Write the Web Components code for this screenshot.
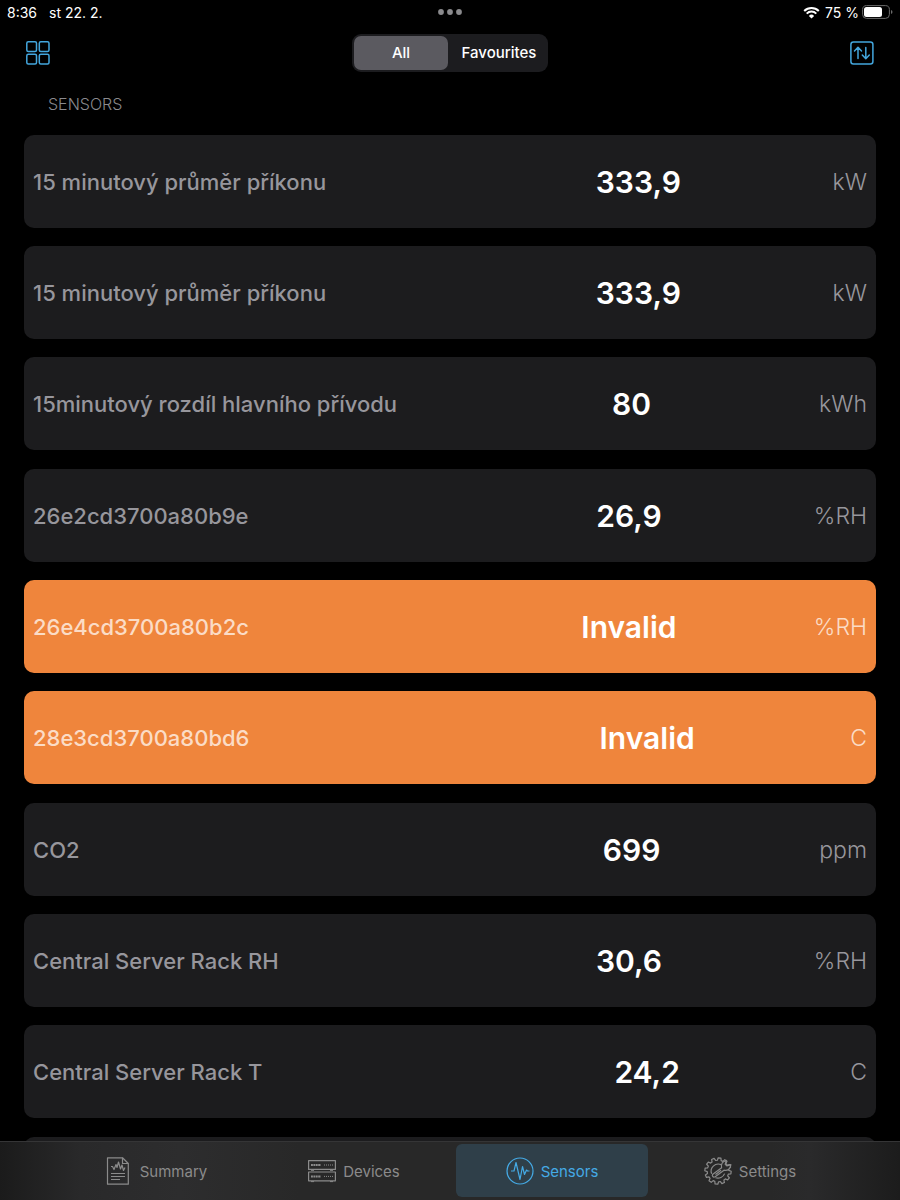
<!DOCTYPE html>
<html lang="en">
<head>
<meta charset="utf-8">
<meta name="viewport" content="width=device-width, initial-scale=1">
<title>Sensors</title>
<style>
html, body { margin: 0; background: #000; }
body { font-family: Inter, "Liberation Sans", sans-serif; color: #fff; }
</style>
</head>
<body>
<sensor-app></sensor-app>
<script>
const define = (name, html, setup) => {
  const template = document.createElement("template");
  template.innerHTML = html;
  customElements.define(name, class extends HTMLElement {
    constructor() {
      super();
      this.attachShadow({ mode: "open" }).append(template.content.cloneNode(true));
    }
    connectedCallback() { if (setup) setup(this, this.shadowRoot); }
  });
};

/* Outline of a cog with rounded-off teeth around (14, 14). */
const cog = (teeth, outer, inner) => {
  const points = [];
  const step = Math.PI * 2 / teeth;
  for (let i = 0; i < teeth; i++) {
    [[-0.34, inner], [-0.2, outer], [0.2, outer], [0.34, inner]].forEach(([shift, r]) => {
      const a = (i + shift) * step - Math.PI / 2 + 0.12;
      points.push((14 + r * Math.cos(a)).toFixed(2) + " " + (14 + r * Math.sin(a)).toFixed(2));
    });
  }
  return "M" + points.join("L") + "Z";
};

const icons = {
  summary: `<path d="M2.500 .8H17.500L23.300 6.500V27.200H2.500Z"/><path d="M17.500 .8V6.500H23.300"/><path d="M6 9.500h1.500l1.500 3 2-5 1 3 1.500-5.500 2 7 1.500-4 1.500 5.500 1.500-3"/><path d="M6 16.500H20M6 19.500H20M6 22.500H15"/>`,
  devices: `<path d="M.6 3.600H27.400V12.400H.6ZM.6 15H27.400V23.800H.6Z"/><path d="M3 13.300h3M22 13.300h3M3 24.600h3M22 24.600h3" stroke-width="1"/><path d="M3 8H13M3 19.400H13" stroke-width="2" stroke-dasharray="1.900 .5"/><path d="M16 8H25M16 19.400H25" stroke-width="1" stroke-dasharray="1 1"/>`,
  sensors: `<circle cx="14" cy="14" r="13"/><path d="M5 14h3l2-8.500L14 22.500 16.500 9.500 18.500 17.500 20.500 13l1 1h2"/>`,
  settings: `<path d="${cog(12, 13.2, 10.8)}"/><path d="M17 7.600A7.200 7.200 0 0 0 7.600 16.800M20.600 16.600A7.200 7.200 0 0 1 11.500 20.800"/><path d="M8.800 17.200L17.600 10.800C16.700 7.300 18.600 4.300 22.300 3.300L21.200 7.400 22.800 8.900 26.900 7.700C26.300 12.300 23.500 14 20 13.200L11.200 19.800C8.900 20.800 7.600 18.800 8.800 17.200Z" fill="#2a2a2a"/><path d="M11.500 17.500L17 13.300"/>`
};

define("status-bar", `
<style>
:host { display: grid; grid-template-columns: 1fr auto 1fr; align-items: center; height: 24px; padding: 0 7px; font-size: 14px; font-weight: 400; white-space: nowrap; }
.left { display: flex; gap: 12px; }
.right { display: flex; gap: 5px; justify-content: flex-end; align-items: center; }
.battery { margin-left: -2px; }
svg { display: block; }
</style>
<div class="left"><span>8:36</span><span>st 22. 2.</span></div>
<svg width="26" height="6" viewBox="0 0 26 6" fill="#8a8a8d"><circle cx="4" cy="3" r="2.900"/><circle cx="13" cy="3" r="2.900"/><circle cx="22" cy="3" r="2.900"/></svg>
<div class="right">
<svg width="17" height="13" viewBox="0 0 17 13" fill="none" stroke="#fff" stroke-width="2"><path d="M1.200 5a10.400 10.400 0 0 1 14.600 0M3.700 7.600a6.800 6.800 0 0 1 9.600 0"/><path d="M8.500 12.500L5.900 9.900a3.700 3.700 0 0 1 5.200 0Z" fill="#fff" stroke="none"/></svg>
<span>75 %</span>
<svg class="battery" width="31" height="14" viewBox="0 0 31 14"><rect x=".6" y=".6" width="26.800" height="12.800" rx="4" fill="none" stroke="#6b6b6b"/><rect x="2" y="2" width="18" height="10" rx="2.500" fill="#fff"/><path d="M29 5v4q1.500-.5 1.500-2T29 5Z" fill="#6b6b6b"/></svg>
</div>`);

define("segment-control", `
<style>
:host { display: flex; padding: 2px; gap: 4px; background: #1c1c1f; border-radius: 9px; }
button { all: unset; box-sizing: border-box; flex: 1 0 94px; height: 34px; padding-bottom: 2px; border-radius: 7px; text-align: center; font-size: 15px; font-weight: 500; color: #fff; cursor: pointer; }
button[aria-pressed="true"] { background: #5b5a60; }
</style>
<button type="button" aria-pressed="true">All</button><button type="button" aria-pressed="false">Favourites</button>`,
(host, root) => {
  const buttons = [...root.querySelectorAll("button")];
  buttons.forEach(b => b.onclick = () => buttons.forEach(o => o.setAttribute("aria-pressed", o === b)));
});

define("tool-bar", `
<style>
:host { display: grid; grid-template-columns: 1fr auto 1fr; align-items: center; height: 58px; padding: 0 26px; }
button { all: unset; display: block; cursor: pointer; }
button:last-child { justify-self: end; }
svg { display: block; fill: none; stroke: #43a6dd; stroke-width: 1.500; stroke-linecap: round; stroke-linejoin: round; }
</style>
<button type="button" aria-label="Grid view"><svg width="24" height="24" viewBox="0 0 24 24"><rect x=".8" y=".8" width="9.700" height="9.700" rx="1.500"/><rect x="13.300" y=".8" width="9.700" height="9.700" rx="1.500"/><rect x=".8" y="13.300" width="9.700" height="9.700" rx="1.500"/><rect x="13.300" y="13.300" width="9.700" height="9.700" rx="1.500"/></svg></button>
<segment-control></segment-control>
<button type="button" aria-label="Sort"><svg width="24" height="24" viewBox="0 0 24 24"><rect x=".9" y=".9" width="22" height="22" rx="2.500"/><path d="M8 17.500V6.500M4.500 10L8 6.200 11.500 10M15.800 6.500V17.500M12.300 14L15.800 17.800 19.300 14"/></svg></button>`);

define("sensor-row", `
<style>
:host { display: flex; align-items: center; box-sizing: border-box; height: 93px; padding: 0 9px; border-radius: 10px; background: #1c1c1e; color: #97969c; font-size: 22px; line-height: 28px; }
:host([invalid]) { background: #ef853c; color: #fbdcc6; }
.name { flex: 0 0 50%; font-weight: 500; }
.value { flex: 1; padding-right: 6px; text-align: center; color: #fff; font-size: 30px; font-weight: 600; }
.unit { font-size: 23px; font-weight: 300; }
</style>
<span class="name"><slot name="name"></slot></span><span class="value"><slot></slot></span><span class="unit"><slot name="unit"></slot></span>`,
host => host.setAttribute("role", "listitem"));

define("sensor-list", `
<style>
:host { display: block; padding: 0 24px; }
h2 { margin: 0; padding: 11px 24px 20px; font-size: 16px; line-height: 22px; font-weight: 300; color: #8a8a8e; }
::slotted(sensor-row) { margin-bottom: 18px; }
::slotted(sensor-row:nth-child(3n)) { margin-bottom: 19px; }
</style>
<h2>SENSORS</h2>
<div role="list"><slot></slot></div>`);

define("tab-item", `
<style>
:host { display: flex; flex: 1; }
button { all: unset; flex: 1; display: flex; align-items: center; justify-content: center; gap: 7px; border-radius: 6px; color: #8b8b8b; font-size: 15px; cursor: pointer; }
:host([selected]) button { background: #2f3f49; color: #45aae5; }
svg { display: block; flex: none; fill: none; stroke: currentColor; stroke-width: 1.200; stroke-linejoin: round; }
span { padding-top: 2px; }
</style>
<button type="button"><svg width="28" height="28" viewBox="0 0 28 28" aria-hidden="true"></svg><span><slot></slot></span></button>`,
(host, root) => {
  root.querySelector("svg").innerHTML = icons[host.getAttribute("icon")];
  if (host.hasAttribute("selected")) root.querySelector("button").setAttribute("aria-current", "page");
});

define("tab-bar", `
<style>
:host { display: flex; gap: 6px; box-sizing: border-box; height: 59px; padding: 2px 54px 3px 60px; border-top: 1px solid #353536; background: linear-gradient(90deg, #1b1b1b, #29292a 80px, #2d2d2e 180px, #282828 300px, #282828 calc(100% - 130px), #2a2a2b calc(100% - 90px), #1c1c1c); }
</style>
<slot></slot>`);

define("sensor-app", `
<style>
:host { display: flex; flex-direction: column; height: 100vh; overflow: hidden; background: #000; }
main { flex: 1; min-height: 0; overflow-y: auto; scrollbar-width: none; }
status-bar, tool-bar, tab-bar { flex: none; }
</style>
<status-bar></status-bar>
<tool-bar></tool-bar>
<main>
<sensor-list>
<sensor-row><span slot="name">15 minutový průměr příkonu</span>333,9<span slot="unit">kW</span></sensor-row>
<sensor-row><span slot="name">15 minutový průměr příkonu</span>333,9<span slot="unit">kW</span></sensor-row>
<sensor-row><span slot="name">15minutový rozdíl hlavního přívodu</span>80<span slot="unit">kWh</span></sensor-row>
<sensor-row><span slot="name">26e2cd3700a80b9e</span>26,9<span slot="unit">%RH</span></sensor-row>
<sensor-row invalid><span slot="name">26e4cd3700a80b2c</span>Invalid<span slot="unit">%RH</span></sensor-row>
<sensor-row invalid><span slot="name">28e3cd3700a80bd6</span>Invalid<span slot="unit">C</span></sensor-row>
<sensor-row><span slot="name">CO2</span>699<span slot="unit">ppm</span></sensor-row>
<sensor-row><span slot="name">Central Server Rack RH</span>30,6<span slot="unit">%RH</span></sensor-row>
<sensor-row><span slot="name">Central Server Rack T</span>24,2<span slot="unit">C</span></sensor-row>
<sensor-row></sensor-row>
</sensor-list>
</main>
<tab-bar>
<tab-item icon="summary">Summary</tab-item>
<tab-item icon="devices">Devices</tab-item>
<tab-item icon="sensors" selected>Sensors</tab-item>
<tab-item icon="settings">Settings</tab-item>
</tab-bar>`);
</script>
</body>
</html>
